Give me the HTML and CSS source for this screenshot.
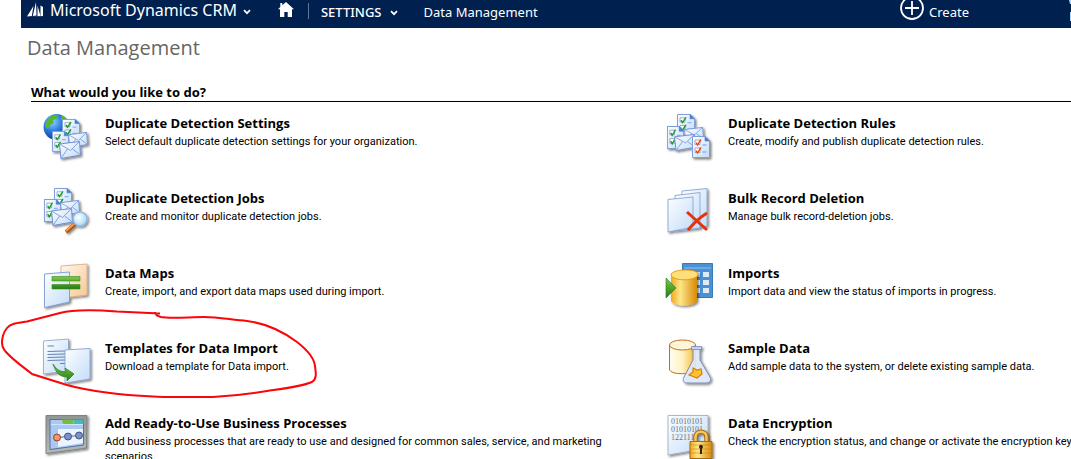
FILE: index.html
```
<!DOCTYPE html>
<html lang="en">
<head>
<meta charset="utf-8">
<title>Data Management - Microsoft Dynamics CRM</title>
<link rel="stylesheet" href="styles.css">
</head>
<body>
<svg class="defs" aria-hidden="true">
  <defs>
    <linearGradient id="paper" x1="0" y1="0" x2="1" y2="1"><stop offset="0" stop-color="#fdfeff"/><stop offset="1" stop-color="#c3dcf9"/></linearGradient>
    <linearGradient id="peach" x1="0" y1="0" x2="1" y2="1"><stop offset="0" stop-color="#fff8ee"/><stop offset="1" stop-color="#f7c795"/></linearGradient>
    <linearGradient id="green" x1="0" y1="0" x2="0" y2="1"><stop offset="0" stop-color="#7ccb45"/><stop offset="1" stop-color="#257e13"/></linearGradient>
    <linearGradient id="gold" x1="0" y1="0" x2="1" y2="0"><stop offset="0" stop-color="#f0a71c"/><stop offset=".35" stop-color="#ffe789"/><stop offset="1" stop-color="#d88a06"/></linearGradient>
    <linearGradient id="cream" x1="0" y1="0" x2="1" y2="0"><stop offset="0" stop-color="#fffdf0"/><stop offset=".5" stop-color="#fff2c4"/><stop offset="1" stop-color="#f7b92c"/></linearGradient>
    <linearGradient id="steel" x1="0" y1="0" x2="0" y2="1"><stop offset="0" stop-color="#8f9694"/><stop offset="1" stop-color="#b5bbba"/></linearGradient>
    <radialGradient id="ocean" cx=".35" cy=".3" r=".75"><stop offset="0" stop-color="#8fd0ff"/><stop offset=".5" stop-color="#2a78df"/><stop offset="1" stop-color="#0a3596"/></radialGradient>
    <radialGradient id="lens" cx=".4" cy=".4" r=".7"><stop offset="0" stop-color="#ffffff"/><stop offset="1" stop-color="#9fd3f6"/></radialGradient>
    <filter id="shade" x="-20%" y="-20%" width="150%" height="150%"><feDropShadow dx="1.5" dy="1.5" stdDeviation="1" flood-color="#000" flood-opacity=".5"/></filter>
    <symbol id="doc" viewBox="0 0 18 22" preserveAspectRatio="none" overflow="visible">
      <path d="M.5.5H13L17.500 5V21.500H.5Z" fill="url(#paper)" stroke="#7f9fdb"/>
      <path d="M13 .5V5h4.500Z" fill="#4b7fd0" stroke="#4b7fd0" stroke-width=".6"/>
      <path d="M3 4h5v4.500H3ZM3 12h5v4.500H3Z" fill="#fff" stroke="#8d97b5" stroke-width=".8"/>
      <path d="M10.500 9h4M10.500 16h4" stroke="#8ab7ef" stroke-width="1.500"/>
      <path d="m4 6.500 1.500 2.500L9 3.500M4 14.500 5.500 17 9 11.500" fill="none" stroke="currentColor" stroke-width="1.400"/>
    </symbol>
    <symbol id="mail" viewBox="0 0 22 18" preserveAspectRatio="none" overflow="visible">
      <path d="M.5 3 20.500.5l1 13.500L2 17.500Z" fill="url(#paper)" stroke="#7290d2"/>
      <path d="M.5 3 11.500 9.500 20.500.5M2 17.500 8.500 8M21.500 14 13.500 8" fill="none" stroke="#7b99d6" stroke-width=".9"/>
    </symbol>
  </defs>
</svg>

<header class="topbar">
  <nav class="nav" aria-label="Main">
    <button class="brand" type="button">
      <svg class="logo" viewBox="0 0 17 16" aria-hidden="true"><path d="M0 14.500 6.500 4 4.800 14ZM5.800 14 9 0l.5 13.500ZM10.500 14V3.500l3 10.500Z" fill="#fff"/><path d="M1 15 16 14V5l-2.500-1.500V14Z" fill="#fff"/></svg>
      <span>Microsoft Dynamics CRM</span>
      <svg class="chev" viewBox="0 0 8 6" aria-hidden="true"><path d="m1 1.200 3 3 3-3" fill="none" stroke="#fff" stroke-width="1.700"/></svg>
    </button>
    <a class="home" href="#" aria-label="Home"><svg viewBox="0 0 16 15" aria-hidden="true"><path d="M8 0 16 7.200h-2V15H9.700v-5H6.300v5H2V7.200H0L2.300 5V1h2v2.300Z" fill="#fff"/></svg></a>
    <span class="divider"></span>
    <button class="area" type="button"><span>SETTINGS</span>
      <svg class="chev" viewBox="0 0 8 6" aria-hidden="true"><path d="m1 1.200 3 3 3-3" fill="none" stroke="#fff" stroke-width="1.700"/></svg>
    </button>
    <a class="crumb" href="#">Data Management</a>
  </nav>
  <button class="create" type="button">
    <svg viewBox="0 0 24 24" aria-hidden="true"><circle cx="12" cy="12" r="11" fill="none" stroke="#fff" stroke-width="1.800"/><path d="M12 5v14M5 12h14" stroke="#fff" stroke-width="1.800"/></svg>
    <span>Create</span>
  </button>
  <svg class="edge" viewBox="0 0 2 24" aria-hidden="true"><path d="M0 0h2v4H1ZM1 12h1v9H1Z" fill="#a5dcf5"/></svg>
</header>

<main class="page">
  <h1>Data Management</h1>
  <h2>What would you like to do?</h2>
  <div class="tasks">
    <a class="task" href="#">
      <svg viewBox="0 0 48 48" aria-hidden="true">
        <circle cx="13.500" cy="14" r="13" fill="url(#ocean)"/>
        <path d="M4 8C6 3 12 1 15 2l-1 3-4 2 1 3-4 2-3 4-2-3ZM18 2c4 1 7 5 8 9l-4-1-4-3Z" fill="#55b82e"/>
        <g filter="url(#shade)" color="#129c2a">
          <use href="#doc" x="19" y="6" width="18" height="20"/><use href="#mail" x="25" y="19" width="20" height="16"/>
          <use href="#doc" x="9" y="18" width="17" height="21"/><use href="#mail" x="16" y="28" width="22" height="18"/>
        </g>
      </svg>
      <span class="text"><strong>Duplicate Detection Settings</strong><span>Select default duplicate detection settings for your organization.</span></span>
    </a>
    <a class="task" href="#">
      <svg viewBox="0 0 48 48" aria-hidden="true">
        <g filter="url(#shade)" color="#129c2a">
          <use href="#doc" x="11" y="1" width="18" height="21"/><use href="#mail" x="18" y="14" width="20" height="15"/>
          <use href="#doc" x="1" y="13" width="17" height="23"/><use href="#mail" x="8" y="21" width="22" height="17"/>
          <use href="#doc" x="26" y="23" width="18" height="22" color="#f04419"/>
        </g>
      </svg>
      <span class="text"><strong>Duplicate Detection Rules</strong><span>Create, modify and publish duplicate detection rules.</span></span>
    </a>
    <a class="task" href="#">
      <svg viewBox="0 0 48 48" aria-hidden="true">
        <g filter="url(#shade)" color="#129c2a">
          <use href="#doc" x="11" y="0" width="18" height="21"/><use href="#mail" x="17" y="12" width="20" height="16"/>
          <use href="#doc" x="1" y="11" width="17" height="23"/><use href="#mail" x="8" y="20" width="22" height="18"/>
          <path d="m32 36-9 8" stroke="#a84e0c" stroke-width="4"/><path d="m31 36-8 7" stroke="#fb9a45" stroke-width="2"/>
          <circle cx="37" cy="31" r="7" fill="url(#lens)" stroke="#8db9df" stroke-width="1.500"/>
        </g>
      </svg>
      <span class="text"><strong>Duplicate Detection Jobs</strong><span>Create and monitor duplicate detection jobs.</span></span>
    </a>
    <a class="task" href="#">
      <svg viewBox="0 0 48 48" aria-hidden="true">
        <g filter="url(#shade)" fill="url(#paper)" stroke="#7f9ccb" stroke-width=".8">
          <path d="m16 3 25-2.500V38L16 41Z"/><path d="m9 7.500 25-3V40L9 43Z"/><path d="m2 11.500 25-2.500V39L2 44Z"/>
        </g>
        <path d="m21 24 20 18M41 25C33 30 27 36 22 42" fill="none" stroke="#e63208" stroke-width="3"/>
      </svg>
      <span class="text"><strong>Bulk Record Deletion</strong><span>Manage bulk record-deletion jobs.</span></span>
    </a>
    <a class="task" href="#">
      <svg viewBox="0 0 48 48" aria-hidden="true">
        <g filter="url(#shade)">
          <path d="m18 3 26-2v31l-26 3Z" fill="url(#peach)" stroke="#d9a878" stroke-width=".8"/>
          <path d="m1.500 11 25-2v30l-25 5.500Z" fill="url(#paper)" stroke="#6f92c9" stroke-width=".8"/>
          <path d="M9 13.500h28V18H9ZM9 21.500h28V26H9Z" fill="url(#green)" stroke="#3b8a24" stroke-width=".6"/>
        </g>
      </svg>
      <span class="text"><strong>Data Maps</strong><span>Create, import, and export data maps used during import.</span></span>
    </a>
    <a class="task" href="#">
      <svg viewBox="0 0 48 48" aria-hidden="true">
        <path d="M16.500.5h30v34h-30Z" fill="#4d91d5" stroke="#3878bc"/>
        <path d="M18 5h27" stroke="#91bfeb"/>
        <path d="M19 9h6v5h-6ZM28 9h6v5h-6ZM37 9h6v5h-6ZM37 17h6v5h-6ZM37 25h6v5h-6ZM28 17h6v5h-6ZM28 25h6v5h-6Z" fill="#deebfa"/>
        <g filter="url(#shade)"><path d="M5 12v26c3 6 23 6 26 0V12Z" fill="url(#gold)"/><path d="M5 12C5 6 31 5 32 11c0 7-25 8-27 1Z" fill="#ffdf7b" stroke="#dd9712" stroke-width=".9"/></g>
        <path d="M0 15 10 25 0 35Z" fill="url(#green)" stroke="#207326" stroke-width=".6"/>
      </svg>
      <span class="text"><strong>Imports</strong><span>Import data and view the status of imports in progress.</span></span>
    </a>
    <a class="task" href="#">
      <svg viewBox="0 0 48 48" aria-hidden="true">
        <g filter="url(#shade)">
          <path d="m.5 3 25-2v32L.5 36Z" fill="url(#paper)" stroke="#8aa2c8" stroke-width=".8"/>
          <path d="M4.500 8H11M4.500 13.500 22 13M4.500 16.500 22 16M4.500 19.500 22 19M4.500 22.500 22 22M17 25.500h5" stroke="#6582b4"/>
          <path d="m22 12 25-1.500V41l-25 4Z" fill="url(#paper)" stroke="#7f9ccb" stroke-width=".8"/>
        </g>
        <path d="M10 26c3 5 7 8 13 8l-1-4 9 6-7 7v-4c-7 0-11-4-14-13Z" fill="url(#green)" stroke="#267b1c" stroke-width=".7"/>
      </svg>
      <span class="text"><strong>Templates for Data Import</strong><span>Download a template for Data import.</span></span>
    </a>
    <a class="task" href="#">
      <svg viewBox="0 0 48 48" aria-hidden="true">
        <path d="M3.500 7v25c2 5 23 5 26 0V7Z" fill="url(#cream)" stroke="#bd6e2a"/>
        <ellipse cx="16.500" cy="7" rx="13" ry="5" fill="#fff6d7" stroke="#bd6e2a"/>
        <g filter="url(#shade)">
          <path d="M27 10h7v12l10 17c2 4-1 6-4 6H22c-4 0-6-2-4-6l9-17Z" fill="#e3ecfb" fill-opacity=".9" stroke="#7889b6"/>
          <path d="M25.500 8.500h10v3h-10Z" fill="#c4d4f2" stroke="#7889b6" stroke-width=".8"/>
        </g>
        <path d="m27 30 4 2 4-1 1 5-5 4-5-2-3-1 4-3Z" fill="#ffc32c" stroke="#d87c13" stroke-width="1.200"/>
      </svg>
      <span class="text"><strong>Sample Data</strong><span>Add sample data to the system, or delete existing sample data.</span></span>
    </a>
    <a class="task" href="#">
      <svg viewBox="0 0 48 48" aria-hidden="true">
        <g filter="url(#shade)"><path d="M3 2.500h41L43.500 35 3 40.500Z" fill="url(#steel)" stroke="#7c8381"/></g>
        <path d="M7 6.500h33.500V32L7 36.500Z" fill="#a9c8f4" stroke="#566f9f"/>
        <path d="M15 16h25v14l-25 4Z" fill="#fff" fill-opacity=".8"/>
        <path d="M19 6.500h11V11H20Z" fill="#74bd45"/><path d="M30.500 6.500h10V11h-10Z" fill="#48b8b9"/><path d="M8 11.500h32" stroke="#d3e4ff"/>
        <path d="M14 24.500 36 22.500" stroke="#4c6694"/>
        <circle cx="14" cy="24.500" r="3.500" fill="#ef9669" stroke="#8e4425"/><circle cx="25" cy="23.500" r="3.500" fill="#7892c5" stroke="#3d558c"/><circle cx="36" cy="22.500" r="3.500" fill="#7892c5" stroke="#3d558c"/>
      </svg>
      <span class="text"><strong>Add Ready-to-Use Business Processes</strong><span>Add business processes that are ready to use and designed for common sales, service, and marketing scenarios.</span></span>
    </a>
    <a class="task" href="#">
      <svg viewBox="0 0 48 48" aria-hidden="true">
        <g filter="url(#shade)"><path d="M2 2.500h40V35L2 42Z" fill="url(#paper)" stroke="#9aa8b4" stroke-width=".8"/></g>
        <g class="digits"><text x="5" y="11">01010101</text><text x="5" y="19">01010101</text><text x="5" y="27">122111</text></g>
        <g filter="url(#shade)">
          <path d="M29.500 29v-5c0-7 11-7 11 0v5" fill="none" stroke="#a66a0b" stroke-width="4.500"/><path d="M29.500 29v-5c0-7 11-7 11 0v5" fill="none" stroke="#f6c65b" stroke-width="2.500"/>
          <path d="M24 28.500h22v17H24Z" fill="url(#gold)" stroke="#a86a08"/>
        </g>
        <path d="M25 32h20M25 36h20M25 40h20" stroke="#bd7d10" stroke-opacity=".5"/>
        <path d="M33 34c0-3 4-3 4 0l-1 2v5h-2v-5Z" fill="#35230a"/>
      </svg>
      <span class="text nowrap"><strong>Data Encryption</strong><span>Check the encryption status, and change or activate the encryption key</span></span>
    </a>
  </div>
</main>
<svg class="annotation" viewBox="0 0 320 90" aria-hidden="true"><path d="M160 4.500 117 2.500C96 1 75 0 60 4L27 12.500C18 14 11 14 7 19 3 24 2 29 2 34s1 5 4 9c7 8 16 14 26 22l35 11c14 4 27 6 43 8 20 3 38 3 57 4h46c19-1 36-3 54-6 14-2 33-4 45-9 5-3 4-9 3-16-1-9-9-17-18-24-16-12-34-19-50-21-15-1-28-4-43-4-14 0-34 2-43 0-4-1-6-2-6-5" fill="none" stroke="#fb0509" stroke-width="2"/></svg>
</body>
</html>
```
FILE: styles.css
```
* { box-sizing: border-box; }

body {
  margin: 0;
  height: 100vh;
  overflow: hidden;
  position: relative;
  background: #fff;
  color: #000;
  font-family: "Noto Sans", "Open Sans", sans-serif;
}

a { color: inherit; text-decoration: none; }

button {
  padding: 0;
  border: 0;
  background: none;
  color: inherit;
  font: inherit;
}

svg { display: block; flex: none; }

.defs { position: absolute; width: 0; height: 0; }

.topbar {
  display: flex;
  align-items: flex-start;
  height: 28px;
  margin-left: 21px;
  padding-left: 6px;
  overflow: hidden;
  background: #00204f;
  color: #fff;
  font-size: 13px;
  line-height: 24px;
  white-space: nowrap;
}

.nav { display: flex; flex: 1; }

.brand, .area, .create { display: flex; align-items: center; }

.brand { gap: 6px; height: 20px; font-size: 16px; line-height: 20px; }
.logo { width: 17px; height: 16px; }
.chev { width: 8px; height: 6px; margin-top: 4px; }
.home { margin: 2px 14px 0 27px; }
.home svg { width: 16px; height: 15px; }
.divider { width: 1px; height: 16px; margin: 3px 12px 0 0; background: #62769a; }
.area { gap: 8px; height: 24px; font-weight: 500; }
.area .chev { margin-top: 2px; }
.crumb { margin-left: 26px; }

.create { gap: 5px; height: 24px; margin-right: 100px; }
.create svg { width: 24px; height: 24px; margin-top: -8px; }
.edge { width: 2px; height: 24px; }

.page { padding-left: 31px; }

h1 {
  margin: 6px 0 0 -4px;
  color: #666;
  font-family: "Open Sans", sans-serif;
  font-size: 20px;
  font-weight: 400;
  line-height: 28px;
}

h2 {
  margin: 21px 0 0;
  border-bottom: 1px solid #000;
  font-size: 13px;
  font-weight: 700;
  line-height: 18px;
}

.tasks {
  display: grid;
  grid-template-columns: minmax(0, 20fr) minmax(0, 13fr);
  grid-auto-rows: 75px;
  padding: 11px 0 0 12px;
}

.task { display: flex; gap: 14px; }
.task > svg { width: 48px; height: 48px; overflow: visible; }

.text {
  flex: 1;
  max-width: 500px;
  padding-top: 1px;
  font-family: Roboto, "Open Sans", sans-serif;
  font-size: 11px;
  line-height: 15px;
}

.text strong {
  display: block;
  margin-bottom: 2px;
  font-family: "Open Sans", sans-serif;
  font-size: 13px;
  line-height: 18px;
}

.nowrap { white-space: nowrap; }

.digits { fill: #68717a; font-family: "Liberation Serif", serif; font-size: 8px; }

.annotation { position: absolute; left: 0; top: 309px; width: 320px; height: 90px; pointer-events: none; }
```
